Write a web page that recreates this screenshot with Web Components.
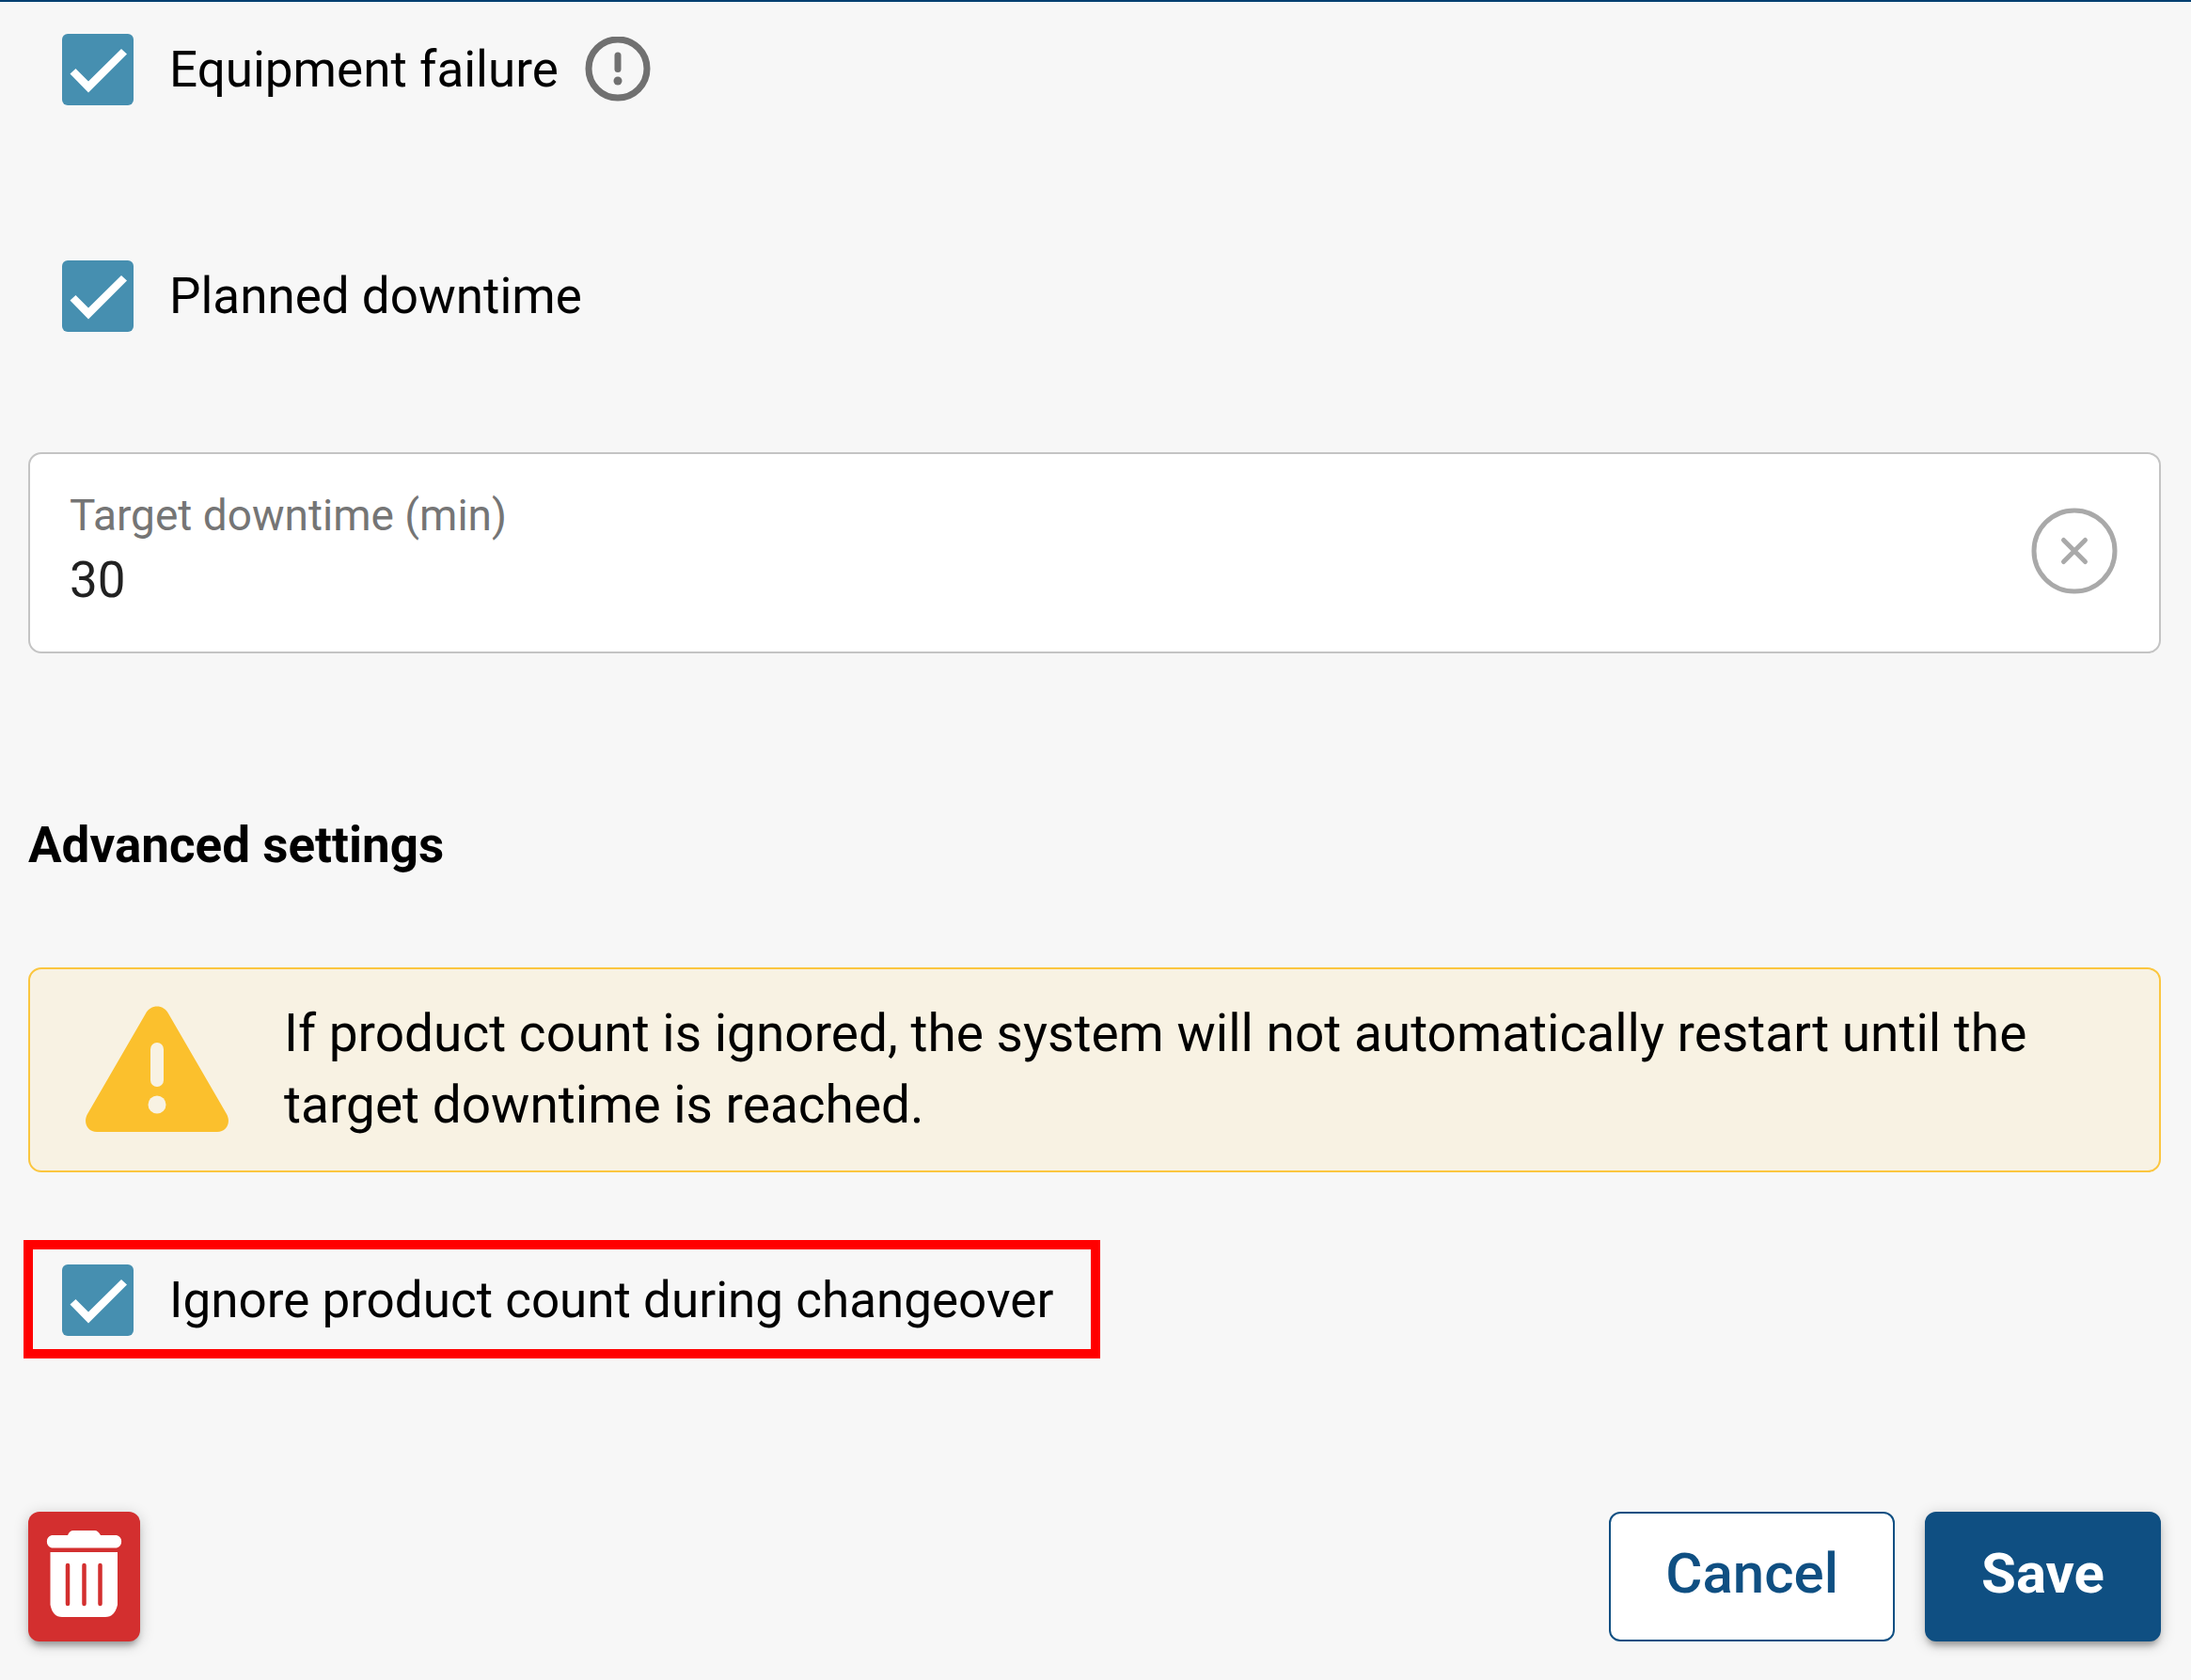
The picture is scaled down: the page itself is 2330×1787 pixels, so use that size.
<!DOCTYPE html>
<html lang="en">
<head>
<meta charset="UTF-8">
<meta name="viewport" content="width=device-width, initial-scale=1">
<title>Downtime settings</title>
<style>
    body {
        margin: 0;
        background: #f7f7f7;
        color: #000;
        font-family: Roboto, "Liberation Sans", sans-serif;
        font-size: 53px;
        line-height: 76px;
    }
</style>
</head>
<body>
<downtime-form>
    <check-option slot="reasons" hint="More about equipment failure">Equipment failure</check-option>
    <check-option slot="reasons">Planned downtime</check-option>
    <clearable-field slot="field" label="Target downtime (min)" value="30"></clearable-field>
    <span slot="heading">Advanced settings</span>
    <warning-note slot="advanced">If product count is ignored, the system will not automatically restart until the target downtime is reached.</warning-note>
    <check-option slot="advanced" highlighted>Ignore product count during changeover</check-option>
    <action-button slot="remove" kind="danger" label="Delete"></action-button>
    <action-button slot="actions" kind="outline">Cancel</action-button>
    <action-button slot="actions" kind="primary">Save</action-button>
</downtime-form>

<script>
class DowntimeForm extends HTMLElement {
    constructor() {
        super();
        this.attachShadow({mode: 'open'});
        this.shadowRoot.innerHTML = `<style>
        :host {
            display: block;
            box-sizing: border-box;
            border-top: 2px solid #003f70;
            padding: 34px 32px 40px 30px;
        }
        .reasons {
            display: flex;
            flex-direction: column;
            align-items: flex-start;
            gap: 165px;
            padding-left: 36px;
            margin-bottom: 128px;
        }
        h2 {
            margin: 166px 0 92px;
            font-size: 53px;
            font-weight: 700;
            line-height: 76px;
        }
        .advanced {
            display: flex;
            flex-direction: column;
            align-items: flex-start;
            gap: 72px;
        }
        footer {
            display: flex;
            align-items: center;
            margin-top: 163px;
        }
        .actions {
            display: flex;
            gap: 32px;
            margin-left: auto;
        }
        </style>
        <div class="reasons"><slot name="reasons"></slot></div>
        <slot name="field"></slot>
        <h2><slot name="heading"></slot></h2>
        <div class="advanced"><slot name="advanced"></slot></div>
        <footer>
            <slot name="remove"></slot>
            <div class="actions"><slot name="actions"></slot></div>
        </footer>
        `;
    }
}

class CheckOption extends HTMLElement {
    constructor() {
        super();
        this.attachShadow({mode: 'open'});
        this.shadowRoot.innerHTML = `<style>
        :host {
            display: inline-flex;
            align-items: center;
            gap: 28px;
        }
        :host([highlighted]) {
            border: 10px solid #f00;
            margin-left: -5px;
            padding: 16px 40px 14px 31px;
        }
        label {
            display: flex;
            align-items: center;
            gap: 38px;
            cursor: pointer;
        }
        .box {
            display: grid;
            width: 76px;
            height: 76px;
        }
        .box > * {
            grid-area: 1 / 1;
        }
        input {
            appearance: none;
            width: 76px;
            height: 76px;
            margin: 0;
            border: 6px solid #757575;
            border-radius: 6px;
        }
        input:checked {
            border: 0;
            background: #468fb0;
        }
        .box svg {
            visibility: hidden;
            pointer-events: none;
        }
        input:checked + svg {
            visibility: visible;
        }
        button {
            display: flex;
            padding: 0;
            border: 0;
            background: none;
            cursor: pointer;
        }
        </style>
        <label>
            <span class="box">
                <input type="checkbox" checked>
                <svg width="76" height="76" viewBox="0 0 76 76"><path fill="#fff" d="M8.500 42.500L14.500 37L28 50.500L63 16L69 21.500L28 62.500Z"/></svg>
            </span>
            <span><slot></slot></span>
        </label>
        `;
    }

    connectedCallback() {
        if (this.hasAttribute('hint')) {
            const hint = document.createElement('button');
            hint.type = 'button';
            hint.setAttribute('aria-label', this.getAttribute('hint'));
            hint.innerHTML = `<svg width="70" height="70" viewBox="0 0 70 70">
                <circle cx="35" cy="34" r="31" fill="none" stroke="#707070" stroke-width="7"/>
                <path d="M35 20V34.500" stroke="#707070" stroke-width="7" stroke-linecap="round"/>
                <circle cx="35" cy="47" r="4.500" fill="#707070"/>
            </svg>`;
            this.shadowRoot.appendChild(hint);
        }
    }
}

class ClearableField extends HTMLElement {
    constructor() {
        super();
        this.attachShadow({mode: 'open'});
        this.shadowRoot.innerHTML = `<style>
        :host {
            display: flex;
            align-items: center;
            box-sizing: border-box;
            border: 2px solid #c4c4c4;
            border-radius: 14px;
            padding: 32px 44px 36px 42px;
            background: #fff;
        }
        .text {
            display: flex;
            flex: 1;
            flex-direction: column;
            padding-bottom: 4px;
        }
        label {
            color: #757575;
            font-size: 46px;
            line-height: 66px;
        }
        input {
            width: 100%;
            box-sizing: border-box;
            border: 0;
            padding: 0;
            outline: 0;
            background: none;
            color: #212121;
            font: inherit;
            height: 72px;
        }
        button {
            display: flex;
            padding: 0;
            border: 0;
            background: none;
            cursor: pointer;
        }
        </style>
        <div class="text">
            <label for="value"></label>
            <input id="value" type="text" inputmode="numeric">
        </div>
        <button type="button" aria-label="Clear">
            <svg width="92" height="92" viewBox="0 0 92 92" fill="none" stroke="#a9a9a9">
                <circle cx="46" cy="46" r="43" stroke-width="5"/>
                <path d="M34.500 34.500L57.500 57.500M57.500 34.500L34.500 57.500" stroke-width="5" stroke-linecap="round"/>
            </svg>
        </button>
        `;
    }

    connectedCallback() {
        const input = this.shadowRoot.querySelector('input');
        this.shadowRoot.querySelector('label').textContent = this.getAttribute('label');
        input.value = this.getAttribute('value');
        this.shadowRoot.querySelector('button').addEventListener('click', () => {
            input.value = '';
            input.focus();
        });
    }
}

class WarningNote extends HTMLElement {
    constructor() {
        super();
        this.attachShadow({mode: 'open'});
        this.shadowRoot.innerHTML = `<style>
        :host {
            display: flex;
            align-items: center;
            align-self: stretch;
            gap: 58px;
            border: 2px solid #fbc63f;
            border-radius: 14px;
            padding: 30px 80px 32px 58px;
            background: #f8f2e3;
            font-size: 55px;
        }
        svg {
            flex: none;
        }
        p {
            margin: 0;
        }
        </style>
        <svg width="154" height="134" viewBox="0 0 154 134">
            <path fill="#fbc02d" d="M65 8C70-2 84-2 89 8L151 115C156 124 151 134 141 134H13C3 134-2 124 3 115Z"/>
            <path d="M77 46V79" stroke="#f8f2e3" stroke-width="14" stroke-linecap="round"/>
            <circle cx="77" cy="105" r="9.500" fill="#f8f2e3"/>
        </svg>
        <p><slot></slot></p>
        `;
    }
}

class ActionButton extends HTMLElement {
    constructor() {
        super();
        this.attachShadow({mode: 'open'});
        this.shadowRoot.innerHTML = `<style>
        :host {
            display: block;
        }
        button {
            display: flex;
            align-items: center;
            justify-content: center;
            box-sizing: border-box;
            height: 138px;
            border: 2px solid #0f4f82;
            border-radius: 12px;
            padding: 0 58px 6px;
            font-family: inherit;
            font-size: 60px;
            line-height: 80px;
            cursor: pointer;
        }
        :host([kind="outline"]) button {
            background: #fff;
            color: #0f4f82;
            font-weight: 500;
        }
        :host([kind="primary"]) button {
            background: #0f4f82;
            color: #fff;
            font-weight: 700;
        }
        :host([kind="danger"]) button {
            border: 0;
            padding: 0 18px 6px;
            background: #d32f2f;
        }
        :host([kind="primary"]) button,
        :host([kind="danger"]) button {
            box-shadow: 0 7px 7px -3px rgba(0, 0, 0, .3), 0 3px 16px rgba(0, 0, 0, .2);
        }
        </style>
        <button type="button"><slot></slot></button>
        `;
    }

    connectedCallback() {
        if (this.getAttribute('kind') === 'danger') {
            const button = this.shadowRoot.querySelector('button');
            button.setAttribute('aria-label', this.getAttribute('label'));
            button.innerHTML = `<svg width="83" height="92" viewBox="0 0 83 92">
                <path fill="#fff" d="M7 5H24Q26 0 30 0H53Q56 0 59 5H76A7 7 0 0 1 76 18.500H7A7 7 0 0 1 7 5Z"/>
                <path fill="#fff" d="M5.500 23H77V79Q74 92 64 92H18Q8 92 5.500 79Z"/>
                <path d="M24 37V78M41.500 37V78M58.500 37V78" stroke="#d32f2f" stroke-width="4.500" stroke-linecap="round"/>
            </svg>`;
        }
    }
}

customElements.define('downtime-form', DowntimeForm);
customElements.define('check-option', CheckOption);
customElements.define('clearable-field', ClearableField);
customElements.define('warning-note', WarningNote);
customElements.define('action-button', ActionButton);
</script>
</body>
</html>
